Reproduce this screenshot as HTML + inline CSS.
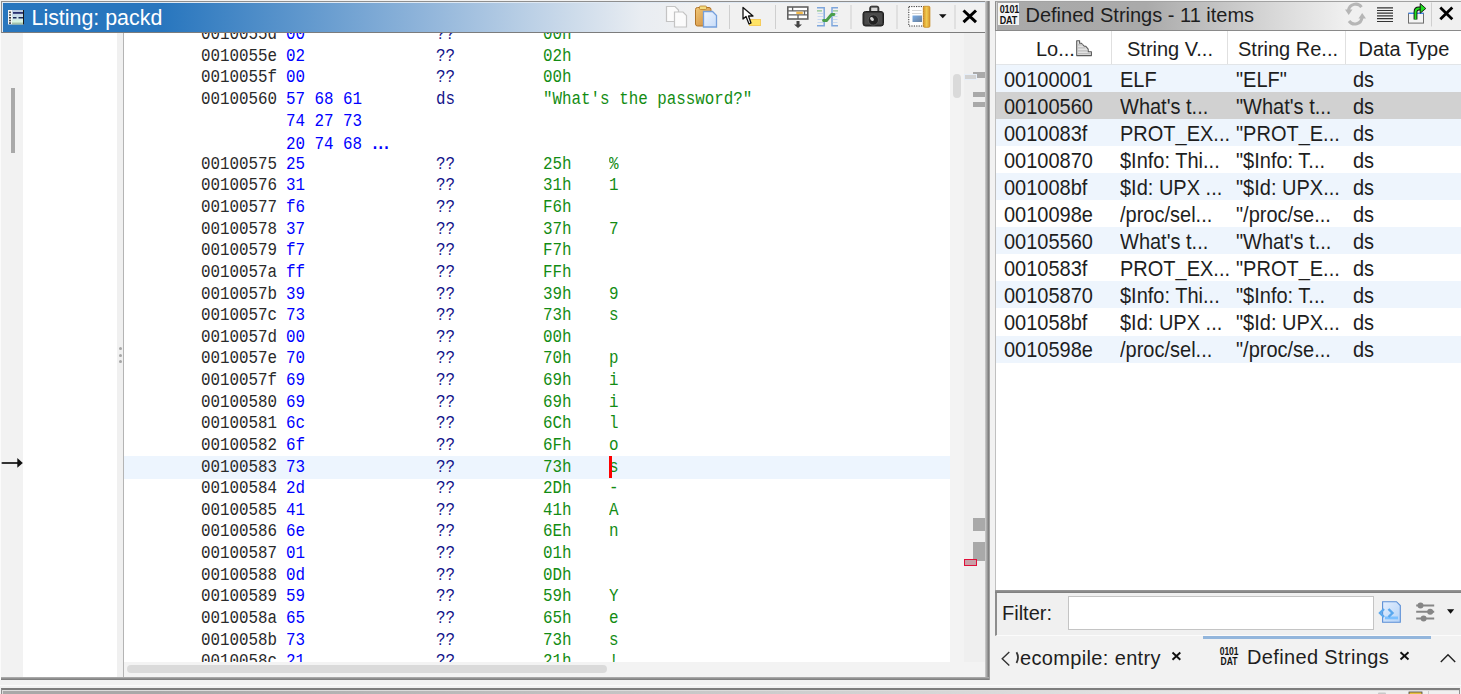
<!DOCTYPE html>
<html><head><meta charset="utf-8">
<style>
*{box-sizing:border-box;margin:0;padding:0}
html,body{width:1461px;height:694px;overflow:hidden;background:#f2f2f2;font-family:"Liberation Sans",sans-serif;position:relative}
.a{position:absolute}
/* left panel */
#ltitle{left:1px;top:1px;width:988px;height:32px;border-top:1px solid #8e8e8e;border-left:1px solid #8e8e8e;border-bottom:1px solid #7c7c7c;
 background:linear-gradient(to right,#2876be 0px,#2876be 160px,#8fb4da 420px,#e9edf2 640px,#f1f1f1 700px);box-shadow:inset 1px 1px 0 #dfe9f4}
#ltitle .t{left:29.5px;top:2.5px;color:#fff;font-size:21.4px;line-height:26px;white-space:nowrap}
#gutter{left:1px;top:33px;width:22px;height:645px;background:#f2f2f2}
#lwhite{left:23px;top:33px;width:94px;height:645px;background:#fff}
#split{left:117px;top:33px;width:6px;height:645px;background:#f0f0f0;border-right:1px solid #b4b4b4;width:7px}
#lmain{left:124px;top:33px;width:826px;height:629px;background:#fff;overflow:hidden}
#hscroll{left:124px;top:662px;width:826px;height:16px;background:#f3f3f3}
#hthumb{left:3px;top:3px;width:480px;height:8px;border-radius:4px;background:#dadada}
#vscroll{left:950px;top:33px;width:14px;height:645px;background:#f3f3f3}
#vthumb{left:3px;top:41px;width:8px;height:24px;border-radius:4px;background:#dadada}
#ovw{left:964px;top:33px;width:23px;height:629px;background:#efefef}
#ovw2{left:964px;top:662px;width:23px;height:16px;background:#f3f3f3}
#lrb{left:985px;top:1px;width:5px;height:679px;background:linear-gradient(to right,#d0d0d0,#a8a8a8 35%,#8a8a8a 60%,#777 80%,#c8c8c8)}
#lbb{left:1px;top:677px;width:988px;height:3px;background:linear-gradient(to bottom,#b4b4b4,#8a8a8a 60%,#7a7a7a)}
.lr{position:absolute;left:0;width:826px;height:21.63px;font-family:"Liberation Mono",monospace;font-size:15.87px;line-height:21.63px;white-space:pre}
.lr span{position:absolute;top:0;transform:scaleY(1.1);transform-origin:50% 50%}
.ad{color:#2a2a2a}
.by{color:#0000ff}
.by b{font-family:'Liberation Sans',sans-serif;font-weight:bold;font-size:16px;letter-spacing:1.3px;margin-left:1px}
.mn{color:#13138a}
.op{color:#138c13}
#hl{left:0;top:423px;width:826px;height:23px;background:#edf5fe}
#cursor{left:485px;top:422.5px;width:3px;height:22px;background:#ff0000}
/* right panel */
#rtitle{left:995px;top:1px;width:466px;height:30px;border-top:1px solid #a2a2a2;border-left:1px solid #8e8e8e;border-bottom:1px solid #8a8a8a;
 background:linear-gradient(to right,#a9a9a9 0px,#aaaaaa 150px,#dcdcdc 290px,#f0f0f0 350px);box-shadow:inset 1px 0 0 #d0d0d0}
#rtitle .t{left:29.5px;top:0px;color:#1e1e1e;font-size:20px;line-height:26px;white-space:nowrap}
#rbody{left:995px;top:31px;width:466px;height:562px;background:#fff;border-left:1px solid #c0c0c0}
#thead{left:996px;top:31px;width:465px;height:34px;background:#fff;border-bottom:1px solid #e2e5e8}
.th{position:absolute;top:1.5px;height:33px;line-height:33px;font-size:20px;color:#1e1e1e;white-space:nowrap}
.cs{position:absolute;top:0;width:1px;height:33px;background:#e0e0e0}
.sr{position:absolute;left:996px;width:465px;font-size:20px;color:#1e1e1e;white-space:nowrap}
.sr span{position:absolute;top:1.6px;transform:scaleY(1.065);transform-origin:50% 50%}
.sr span{margin-left:-996px}
.alt{background:#eef5fd}
.sel{background:#d1d1d1}
.wht{background:#fff}
#rdiv{left:995px;top:590px;width:466px;height:3px;background:linear-gradient(to bottom,#9a9a9a,#7c7c7c)}
#filter{left:995px;top:593px;width:466px;height:43px;background:#f0f0f0;border-left:2px solid #8e8e8e;border-bottom:1px solid #fbfbfb}
#filter .t{left:5px;top:5px;font-size:20px;line-height:30px;color:#1e1e1e}
#ffield{left:71px;top:3px;width:306px;height:34px;background:#fff;border:1px solid #c4c4c4}
#tabline{left:1203px;top:636px;width:228px;height:3px;background:#93b6dc}
.tab{position:absolute;font-size:20px;color:#1e1e1e;white-space:nowrap;line-height:26px}
/* bottom panel */
#bpanel{left:1px;top:688px;width:1459px;height:10px;border-top:2px solid #7e7e7e;border-left:1px solid #8e8e8e;border-right:1px solid #8e8e8e;
 background:linear-gradient(to right,#a8a8a8 153px,#f0f0f0 1363px);box-shadow:inset 1px 1px 0 #dcdcdc}
#bwhite{left:0;top:685px;width:1461px;height:1px;background:#fbfbfb}
</style></head><body>

<!-- LEFT PANEL -->
<div class="a" id="ltitle">
  <svg class="a" style="left:4px;top:6px" width="18" height="17" viewBox="6 8 18 17">
    <defs><linearGradient id="lic" x1="0" y1="0" x2="0" y2="1"><stop offset="0" stop-color="#b8c8e0"/><stop offset="0.55" stop-color="#d0e4ec"/><stop offset="0.8" stop-color="#d8f4e0"/><stop offset="1" stop-color="#8aa890"/></linearGradient></defs>
    <rect x="8" y="10" width="16" height="14.5" fill="#f4f4f4"/>
    <rect x="12" y="10" width="11" height="14.5" fill="url(#lic)"/>
    <rect x="23" y="10" width="1.3" height="14.5" fill="#1a1a1a"/>
    <rect x="9" y="11.5" width="2" height="1.6" fill="#555"/><rect x="9" y="14.2" width="2" height="1.6" fill="#666"/><rect x="9" y="17" width="2" height="1.6" fill="#333"/><rect x="9" y="19.7" width="2" height="1.6" fill="#555"/><rect x="9" y="22.3" width="2" height="1.6" fill="#444"/>
    <rect x="13" y="12" width="10" height="1.8" fill="#2a3070"/>
    <rect x="13" y="17" width="3.5" height="1.5" fill="#1d2a5a"/><rect x="18.5" y="17" width="4.5" height="1.5" fill="#1d2a5a"/>
  </svg>
  <div class="a t">Listing: packd</div>
</div>
<svg class="a" style="left:0;top:0" width="990" height="33" viewBox="0 0 990 33">
  <defs>
    <linearGradient id="clipg" x1="0" y1="0" x2="1" y2="1"><stop offset="0" stop-color="#f0c878"/><stop offset="1" stop-color="#d08838"/></linearGradient>
    <linearGradient id="pageb" x1="0" y1="0" x2="1" y2="1"><stop offset="0" stop-color="#eef5ff"/><stop offset="1" stop-color="#c8dcf8"/></linearGradient>
    <linearGradient id="ruler" x1="0" y1="0" x2="1" y2="0"><stop offset="0" stop-color="#d8922a"/><stop offset="0.5" stop-color="#f0cc50"/><stop offset="1" stop-color="#d8922a"/></linearGradient>
    <linearGradient id="imgb" x1="0" y1="0" x2="1" y2="1"><stop offset="0" stop-color="#7aaee8"/><stop offset="1" stop-color="#6a7f9a"/></linearGradient>
  </defs>
  <!-- copy -->
  <path d="M666.5 6.5H675L678.5 10V21.5H666.5Z" fill="#fbfbfb" stroke="#c4c4c4" stroke-width="1.2"/>
  <path d="M674.5 12H683L686.5 15.5V27H674.5Z" fill="#fbfbfb" stroke="#c4c4c4" stroke-width="1.2"/>
  <!-- paste -->
  <rect x="695.5" y="7.5" width="15.5" height="18.5" rx="2" fill="url(#clipg)" stroke="#b07428" stroke-width="1"/>
  <rect x="699.5" y="6" width="7" height="3.5" rx="1" fill="#f4dc80" stroke="#b8802c" stroke-width="0.8"/>
  <path d="M703.5 11.5H712.5L716.5 15.5V27H703.5Z" fill="url(#pageb)" stroke="#76a0dc" stroke-width="1.3"/>
  <!-- sep -->
  <rect x="729" y="5" width="1" height="24" fill="#cfcfcf"/>
  <!-- cursor -->
  <rect x="749.5" y="19.5" width="11" height="6" fill="#ffe466" stroke="#f6cc5a" stroke-width="1"/>
  <path d="M743 7.5V19L746 16.5L749 24L751 23L748.5 16H753Z" fill="#fff" stroke="#111" stroke-width="1.3" stroke-linejoin="round"/>
  <rect x="775" y="5" width="1" height="24" fill="#cfcfcf"/>
  <!-- table arrow -->
  <rect x="787.8" y="7" width="20" height="12" fill="#fff" stroke="#626262" stroke-width="1.6"/>
  <path d="M787.8 10.8H807.8M787.8 14.8H807.8M792.6 7V10.8M804.5 10.8V14.8M798 14.8V19" stroke="#626262" stroke-width="1.3"/>
  <rect x="796.3" y="11.7" width="6.5" height="2.3" fill="#f2b84a"/>
  <path d="M796.5 21V24.5H794L798 28L802 24.5H799.5V21Z" fill="#444"/>
  <!-- diff -->
  <path d="M817 7.8H824.2V25.8H817" fill="none" stroke="#7ea6dc" stroke-width="1.5"/>
  <path d="M838 7.8H832V25.8H838" fill="none" stroke="#7ea6dc" stroke-width="1.5"/>
  <path d="M817 10.8H822M833 10.8H838" stroke="#8cc48c" stroke-width="1.2"/>
  <path d="M817.5 13.5H823M817.5 16.5H823M817.5 19.5H823M817.5 22.5H823M832.8 13.5H837.5M832.8 16.5H837.5M832.8 19.5H837.5M832.8 22.5H837.5" stroke="#c6d8f0" stroke-width="1"/>
  <path d="M823.5 20.5L826.5 20.5L831.5 14.5L834 14.5" fill="none" stroke="#4a9e4a" stroke-width="2.8" stroke-linecap="round" stroke-linejoin="round"/>
  <rect x="850.5" y="5" width="1" height="24" fill="#cfcfcf"/>
  <!-- camera -->
  <path d="M869.8 11.5V8Q869.8 6.2 871.6 6.2H877Q878.8 6.2 878.8 8V11.5" fill="#3a3a3a" stroke="#2a2a2a" stroke-width="1"/>
  <rect x="871.2" y="7.6" width="6.2" height="3.6" fill="#d8d8d8"/>
  <rect x="863" y="11.5" width="20.5" height="14.5" rx="2.5" fill="#333" stroke="#1e1e1e" stroke-width="1"/>
  <rect x="864.5" y="13" width="17.5" height="11.5" rx="1" fill="#4a4a4a"/>
  <circle cx="873.3" cy="20" r="5.2" fill="#222" stroke="#5a5a5a" stroke-width="1"/>
  <ellipse cx="872" cy="19" rx="1.6" ry="2.2" transform="rotate(-40 872 19)" fill="#d0d0d0"/>
  <rect x="896.5" y="5" width="1" height="24" fill="#cfcfcf"/>
  <!-- page ruler -->
  <rect x="908.8" y="6.6" width="15" height="19.4" fill="#fff" stroke="#333" stroke-width="1" stroke-dasharray="1.2 1.2"/>
  <path d="M912 10.5H921.5M912 13.5H921.5" stroke="#d6d6d6" stroke-width="1"/>
  <rect x="912.5" y="15.5" width="9.5" height="6.5" fill="url(#imgb)"/>
  <rect x="923.3" y="6.3" width="6.6" height="21" rx="1.2" fill="url(#ruler)" stroke="#c88a20" stroke-width="0.8"/>
  <path d="M939 14.2H946.5L942.75 18.2Z" fill="#111"/>
  <rect x="954.5" y="5" width="1" height="24" fill="#cfcfcf"/>
  <!-- close X -->
  <path d="M963.5 10.5L976 22.2M976 10.5L963.5 22.2" stroke="#000" stroke-width="3"/>
</svg>

<div class="a" id="gutter"><div class="a" style="left:10px;top:55px;width:4px;height:65px;background:#a9a9a9"></div>
  <svg class="a" style="left:-1px;top:422px" width="24" height="15" viewBox="0 0 24 15"><path d="M2.5 8H18" stroke="#333" stroke-width="2.1" stroke-linecap="round"/><path d="M17.3 3L22.8 8L17.3 12.8Z" fill="#111"/></svg>
</div>
<div class="a" id="lwhite"></div>
<div class="a" style="left:0;top:33px;width:1px;height:647px;background:#fbfbfb"></div>
<div class="a" id="split">
  <div class="a" style="left:1.5px;top:313.7px;width:3px;height:3px;border-radius:2px;background:#a6a6a6"></div>
  <div class="a" style="left:1.5px;top:320.6px;width:3px;height:3px;border-radius:2px;background:#a6a6a6"></div>
  <div class="a" style="left:1.5px;top:327.4px;width:3px;height:3px;border-radius:2px;background:#a6a6a6"></div>
</div>
<div class="a" id="lmain">
  <div class="a" id="hl"></div>
<div class="lr" style="top:-8.00px"><span class="ad" style="left:77px">0010055d</span><span class="by" style="left:162px">00</span><span class="mn" style="left:312px">??</span><span class="op" style="left:419px">00h</span></div>
<div class="lr" style="top:13.63px"><span class="ad" style="left:77px">0010055e</span><span class="by" style="left:162px">02</span><span class="mn" style="left:312px">??</span><span class="op" style="left:419px">02h</span></div>
<div class="lr" style="top:35.26px"><span class="ad" style="left:77px">0010055f</span><span class="by" style="left:162px">00</span><span class="mn" style="left:312px">??</span><span class="op" style="left:419px">00h</span></div>
<div class="lr" style="top:56.89px"><span class="ad" style="left:77px">00100560</span><span class="by" style="left:162px">57 68 61</span><span class="mn" style="left:312px">ds</span><span class="op" style="left:419px">&quot;What&#x27;s the password?&quot;</span></div>
<div class="lr" style="top:78.52px"><span class="by" style="left:162px">74 27 73</span></div>
<div class="lr" style="top:100.15px"><span class="by" style="left:162px">20 74 68 <b>...</b></span></div>
<div class="lr" style="top:121.78px"><span class="ad" style="left:77px">00100575</span><span class="by" style="left:162px">25</span><span class="mn" style="left:312px">??</span><span class="op" style="left:419px">25h</span><span class="op" style="left:485px">%</span></div>
<div class="lr" style="top:143.41px"><span class="ad" style="left:77px">00100576</span><span class="by" style="left:162px">31</span><span class="mn" style="left:312px">??</span><span class="op" style="left:419px">31h</span><span class="op" style="left:485px">1</span></div>
<div class="lr" style="top:165.04px"><span class="ad" style="left:77px">00100577</span><span class="by" style="left:162px">f6</span><span class="mn" style="left:312px">??</span><span class="op" style="left:419px">F6h</span></div>
<div class="lr" style="top:186.67px"><span class="ad" style="left:77px">00100578</span><span class="by" style="left:162px">37</span><span class="mn" style="left:312px">??</span><span class="op" style="left:419px">37h</span><span class="op" style="left:485px">7</span></div>
<div class="lr" style="top:208.30px"><span class="ad" style="left:77px">00100579</span><span class="by" style="left:162px">f7</span><span class="mn" style="left:312px">??</span><span class="op" style="left:419px">F7h</span></div>
<div class="lr" style="top:229.93px"><span class="ad" style="left:77px">0010057a</span><span class="by" style="left:162px">ff</span><span class="mn" style="left:312px">??</span><span class="op" style="left:419px">FFh</span></div>
<div class="lr" style="top:251.56px"><span class="ad" style="left:77px">0010057b</span><span class="by" style="left:162px">39</span><span class="mn" style="left:312px">??</span><span class="op" style="left:419px">39h</span><span class="op" style="left:485px">9</span></div>
<div class="lr" style="top:273.19px"><span class="ad" style="left:77px">0010057c</span><span class="by" style="left:162px">73</span><span class="mn" style="left:312px">??</span><span class="op" style="left:419px">73h</span><span class="op" style="left:485px">s</span></div>
<div class="lr" style="top:294.82px"><span class="ad" style="left:77px">0010057d</span><span class="by" style="left:162px">00</span><span class="mn" style="left:312px">??</span><span class="op" style="left:419px">00h</span></div>
<div class="lr" style="top:316.45px"><span class="ad" style="left:77px">0010057e</span><span class="by" style="left:162px">70</span><span class="mn" style="left:312px">??</span><span class="op" style="left:419px">70h</span><span class="op" style="left:485px">p</span></div>
<div class="lr" style="top:338.08px"><span class="ad" style="left:77px">0010057f</span><span class="by" style="left:162px">69</span><span class="mn" style="left:312px">??</span><span class="op" style="left:419px">69h</span><span class="op" style="left:485px">i</span></div>
<div class="lr" style="top:359.71px"><span class="ad" style="left:77px">00100580</span><span class="by" style="left:162px">69</span><span class="mn" style="left:312px">??</span><span class="op" style="left:419px">69h</span><span class="op" style="left:485px">i</span></div>
<div class="lr" style="top:381.34px"><span class="ad" style="left:77px">00100581</span><span class="by" style="left:162px">6c</span><span class="mn" style="left:312px">??</span><span class="op" style="left:419px">6Ch</span><span class="op" style="left:485px">l</span></div>
<div class="lr" style="top:402.97px"><span class="ad" style="left:77px">00100582</span><span class="by" style="left:162px">6f</span><span class="mn" style="left:312px">??</span><span class="op" style="left:419px">6Fh</span><span class="op" style="left:485px">o</span></div>
<div class="lr" style="top:424.60px"><span class="ad" style="left:77px">00100583</span><span class="by" style="left:162px">73</span><span class="mn" style="left:312px">??</span><span class="op" style="left:419px">73h</span><span class="op" style="left:485px">s</span></div>
<div class="lr" style="top:446.23px"><span class="ad" style="left:77px">00100584</span><span class="by" style="left:162px">2d</span><span class="mn" style="left:312px">??</span><span class="op" style="left:419px">2Dh</span><span class="op" style="left:485px">-</span></div>
<div class="lr" style="top:467.86px"><span class="ad" style="left:77px">00100585</span><span class="by" style="left:162px">41</span><span class="mn" style="left:312px">??</span><span class="op" style="left:419px">41h</span><span class="op" style="left:485px">A</span></div>
<div class="lr" style="top:489.49px"><span class="ad" style="left:77px">00100586</span><span class="by" style="left:162px">6e</span><span class="mn" style="left:312px">??</span><span class="op" style="left:419px">6Eh</span><span class="op" style="left:485px">n</span></div>
<div class="lr" style="top:511.12px"><span class="ad" style="left:77px">00100587</span><span class="by" style="left:162px">01</span><span class="mn" style="left:312px">??</span><span class="op" style="left:419px">01h</span></div>
<div class="lr" style="top:532.75px"><span class="ad" style="left:77px">00100588</span><span class="by" style="left:162px">0d</span><span class="mn" style="left:312px">??</span><span class="op" style="left:419px">0Dh</span></div>
<div class="lr" style="top:554.38px"><span class="ad" style="left:77px">00100589</span><span class="by" style="left:162px">59</span><span class="mn" style="left:312px">??</span><span class="op" style="left:419px">59h</span><span class="op" style="left:485px">Y</span></div>
<div class="lr" style="top:576.01px"><span class="ad" style="left:77px">0010058a</span><span class="by" style="left:162px">65</span><span class="mn" style="left:312px">??</span><span class="op" style="left:419px">65h</span><span class="op" style="left:485px">e</span></div>
<div class="lr" style="top:597.64px"><span class="ad" style="left:77px">0010058b</span><span class="by" style="left:162px">73</span><span class="mn" style="left:312px">??</span><span class="op" style="left:419px">73h</span><span class="op" style="left:485px">s</span></div>
<div class="lr" style="top:619.27px"><span class="ad" style="left:77px">0010058c</span><span class="by" style="left:162px">21</span><span class="mn" style="left:312px">??</span><span class="op" style="left:419px">21h</span><span class="op" style="left:485px">!</span></div>
  <div class="a" id="cursor"></div>
</div>
<div class="a" id="hscroll"><div class="a" id="hthumb"></div></div>
<div class="a" id="vscroll"><div class="a" id="vthumb"></div></div>
<div class="a" id="ovw">
  <div class="a" style="left:9px;top:39px;width:13px;height:6px;background:#a9a9a9"></div>
  <div class="a" style="left:0px;top:41px;width:13px;height:6px;background:#d2d2d2;border:1px solid #e6eef8"></div>
  <div class="a" style="left:9px;top:59px;width:13px;height:5px;background:#a9a9a9"></div>
  <div class="a" style="left:9px;top:69px;width:13px;height:5px;background:#a9a9a9"></div>
  <div class="a" style="left:9px;top:485px;width:13px;height:13px;background:#a9a9a9"></div>
  <div class="a" style="left:9px;top:509px;width:13px;height:19px;background:#a9a9a9"></div>
  <div class="a" style="left:0px;top:526px;width:13px;height:7px;background:#c8a0a8;border:1px solid #e0103a"></div>
</div>
<div class="a" id="ovw2"></div>
<div class="a" id="lrb"></div>
<div class="a" id="lbb"></div>

<!-- RIGHT PANEL -->
<div class="a" id="rtitle">
  <div class="a" style="left:2px;top:1px;width:20.5px;height:22px;background:#f4f4f4;font-family:'Liberation Sans',sans-serif;font-size:11px;line-height:10.5px;color:#111;text-align:center;padding-top:1px;font-weight:bold;letter-spacing:-0.3px"><div style="transform:scaleX(0.82)">0101<br>DAT</div></div>
  <div class="a t">Defined Strings - 11 items</div>
</div>
<svg class="a" style="left:1330px;top:0" width="131" height="31" viewBox="1330 0 131 31">
  <!-- refresh -->
  <path d="M1361.5 7.2A7.2 7.2 0 0 0 1348.5 10.5" fill="none" stroke="#b6b6b6" stroke-width="3"/>
  <path d="M1345 9.5L1352.5 9.5L1348.7 15Z" fill="#b6b6b6"/>
  <path d="M1349 21A7.2 7.2 0 0 0 1362 17.5" fill="none" stroke="#b6b6b6" stroke-width="3"/>
  <path d="M1358.5 18.5L1366 18.5L1362.2 13Z" fill="#b6b6b6"/>
  <!-- lines -->
  <path d="M1377 7.8H1393M1377 10.5H1393M1377 13.2H1393M1377 15.9H1393M1377 18.6H1393M1377 21.5H1393" stroke="#333" stroke-width="1.2"/>
  <!-- export -->
  <rect x="1408.5" y="13.3" width="15" height="9.8" fill="#f4f4f4" stroke="#6e6e6e" stroke-width="1"/>
  <path d="M1408.5 13.3H1423.5" stroke="#3a8cff" stroke-width="1.2"/>
  <path d="M1415.5 19.5V12Q1415.5 8.5 1419 8.5H1421" fill="none" stroke="#111" stroke-width="3.8"/>
  <path d="M1415.5 19.5V12Q1415.5 8.5 1419 8.5H1421" fill="none" stroke="#22e022" stroke-width="2"/>
  <path d="M1420.2 3.5L1425.8 8.5L1420.2 13.2Z" fill="#22e022" stroke="#111" stroke-width="0.9"/>
  <rect x="1431" y="2.5" width="1" height="24" fill="#cfcfcf"/>
  <!-- X -->
  <path d="M1440.3 7.5L1452.3 19.2M1452.3 7.5L1440.3 19.2" stroke="#000" stroke-width="2.8"/>
</svg>

<div class="a" id="rbody"></div>
<div class="a" id="thead">
  <div class="th" style="left:40px">Lo...</div>
  <svg class="a" style="left:80px;top:9px" width="17" height="17" viewBox="0 0 17 17"><path d="M0.7 0.7H3.6V3.2H5.2L8.2 6.2H9.6L12.2 9.2V11.8H15.4V15.6H0.7Z" fill="#e2e2e2" stroke="#5a5a5a" stroke-width="1.1" stroke-linejoin="round"/><path d="M1.5 4.8H6.5M1.5 7.8H9.5M1.5 10.8H11.5M1.5 13.6H14.6" stroke="#bdbdbd" stroke-width="1.2"/></svg>
  <div class="cs" style="left:115px"></div>
  <div class="th" style="left:131px">String V...</div>
  <div class="cs" style="left:231px"></div>
  <div class="th" style="left:242px">String Re...</div>
  <div class="cs" style="left:349px"></div>
  <div class="th" style="left:362.5px">Data Type</div>
</div>
<div class="sr alt" style="top:65.00px;height:27.05px;line-height:27.05px"><span style="left:1004px">00100001</span><span style="left:1120px">ELF</span><span style="left:1236px">&quot;ELF&quot;</span><span style="left:1353px">ds</span></div>
<div class="sr sel" style="top:92.05px;height:27.05px;line-height:27.05px"><span style="left:1004px">00100560</span><span style="left:1120px">What&#x27;s t...</span><span style="left:1236px">&quot;What&#x27;s t...</span><span style="left:1353px">ds</span></div>
<div class="sr alt" style="top:119.10px;height:27.05px;line-height:27.05px"><span style="left:1004px">0010083f</span><span style="left:1120px">PROT_EX...</span><span style="left:1236px">&quot;PROT_E...</span><span style="left:1353px">ds</span></div>
<div class="sr wht" style="top:146.15px;height:27.05px;line-height:27.05px"><span style="left:1004px">00100870</span><span style="left:1120px">$Info: Thi...</span><span style="left:1236px">&quot;$Info: T...</span><span style="left:1353px">ds</span></div>
<div class="sr alt" style="top:173.20px;height:27.05px;line-height:27.05px"><span style="left:1004px">001008bf</span><span style="left:1120px">$Id: UPX ...</span><span style="left:1236px">&quot;$Id: UPX...</span><span style="left:1353px">ds</span></div>
<div class="sr wht" style="top:200.25px;height:27.05px;line-height:27.05px"><span style="left:1004px">0010098e</span><span style="left:1120px">/proc/sel...</span><span style="left:1236px">&quot;/proc/se...</span><span style="left:1353px">ds</span></div>
<div class="sr alt" style="top:227.30px;height:27.05px;line-height:27.05px"><span style="left:1004px">00105560</span><span style="left:1120px">What&#x27;s t...</span><span style="left:1236px">&quot;What&#x27;s t...</span><span style="left:1353px">ds</span></div>
<div class="sr wht" style="top:254.35px;height:27.05px;line-height:27.05px"><span style="left:1004px">0010583f</span><span style="left:1120px">PROT_EX...</span><span style="left:1236px">&quot;PROT_E...</span><span style="left:1353px">ds</span></div>
<div class="sr alt" style="top:281.40px;height:27.05px;line-height:27.05px"><span style="left:1004px">00105870</span><span style="left:1120px">$Info: Thi...</span><span style="left:1236px">&quot;$Info: T...</span><span style="left:1353px">ds</span></div>
<div class="sr wht" style="top:308.45px;height:27.05px;line-height:27.05px"><span style="left:1004px">001058bf</span><span style="left:1120px">$Id: UPX ...</span><span style="left:1236px">&quot;$Id: UPX...</span><span style="left:1353px">ds</span></div>
<div class="sr alt" style="top:335.50px;height:27.05px;line-height:27.05px"><span style="left:1004px">0010598e</span><span style="left:1120px">/proc/sel...</span><span style="left:1236px">&quot;/proc/se...</span><span style="left:1353px">ds</span></div>
<div class="a" id="rdiv"></div>
<div class="a" id="filter">
  <div class="a t">Filter:</div>
  <div class="a" id="ffield"></div>
</div>

<div class="a" id="tabline"></div>
<svg class="a" style="left:990px;top:590px" width="471" height="104" viewBox="990 590 471 104">
  <defs><linearGradient id="docb" x1="0" y1="0" x2="1" y2="1"><stop offset="0" stop-color="#e4efff"/><stop offset="1" stop-color="#b4d2f6"/></linearGradient></defs>
  <!-- blue doc -->
  <path d="M1382.6 601.7H1396.5L1400.3 605.5V622.2H1382.6Z" fill="url(#docb)" stroke="#5b8fd6" stroke-width="1.1"/>
  <rect x="1385" y="616.5" width="13" height="2.8" fill="#7cc0ff"/>
  <path d="M1384 609L1380 613L1384 617" fill="none" stroke="#5aa8ee" stroke-width="2.4"/>
  <path d="M1388.5 609L1392.5 613L1388.5 617" fill="none" stroke="#5aa8ee" stroke-width="2.4"/>
  <!-- sliders -->
  <path d="M1416.2 605.6H1434.2M1416.2 611.8H1434.2M1416.2 618.4H1434.2" stroke="#868686" stroke-width="2"/>
  <circle cx="1420.5" cy="605.6" r="3" fill="#868686"/>
  <circle cx="1430.2" cy="611.8" r="3" fill="#868686"/>
  <circle cx="1423.6" cy="618.4" r="3" fill="#868686"/>
  <path d="M1447 609.2H1454.2L1450.6 613.7Z" fill="#111"/>
  <!-- tabs -->
  <path d="M1009.3 652L1002.2 658.8L1009.3 665.6" fill="none" stroke="#333" stroke-width="1.4"/>
  <path d="M1016.5 652.3Q1019.5 657.5 1016.5 663" fill="none" stroke="#333" stroke-width="1.8"/>
  <path d="M1172.5 652.5L1180.3 659.8M1180.3 652.5L1172.5 659.8" stroke="#111" stroke-width="1.9"/>
  <path d="M1400.5 652.2L1408.5 659.5M1408.5 652.2L1400.5 659.5" stroke="#111" stroke-width="1.9"/>
  <path d="M1440.8 662L1448 654.7L1455.2 662" fill="none" stroke="#222" stroke-width="1.4"/>
</svg>
<div class="tab" style="left:1020px;top:645px;font-size:20px;letter-spacing:0.35px">ecompile: entry</div>
<div class="a" style="left:1218px;top:647px;width:22px;height:20px;font-size:10px;line-height:9.5px;color:#111;text-align:center;font-weight:bold;transform:scaleX(0.85)">0101<br>DAT</div>
<div class="tab" style="left:1247px;top:644px;font-size:20px;letter-spacing:0.35px">Defined Strings</div>
<svg class="a" style="left:1370px;top:688px;z-index:5" width="91" height="6" viewBox="1370 688 91 6">
  <rect x="1378" y="692.5" width="8" height="2" rx="1" fill="#c8c8c8"/>
  <rect x="1409" y="692" width="13" height="3" fill="#e8c040" stroke="#444" stroke-width="0.8"/>
  <rect x="1428" y="691" width="1" height="4" fill="#cfcfcf"/>
</svg>


<!-- BOTTOM PANEL -->
<div class="a" id="bwhite"></div>
<div class="a" id="bpanel"></div>
</body></html>
